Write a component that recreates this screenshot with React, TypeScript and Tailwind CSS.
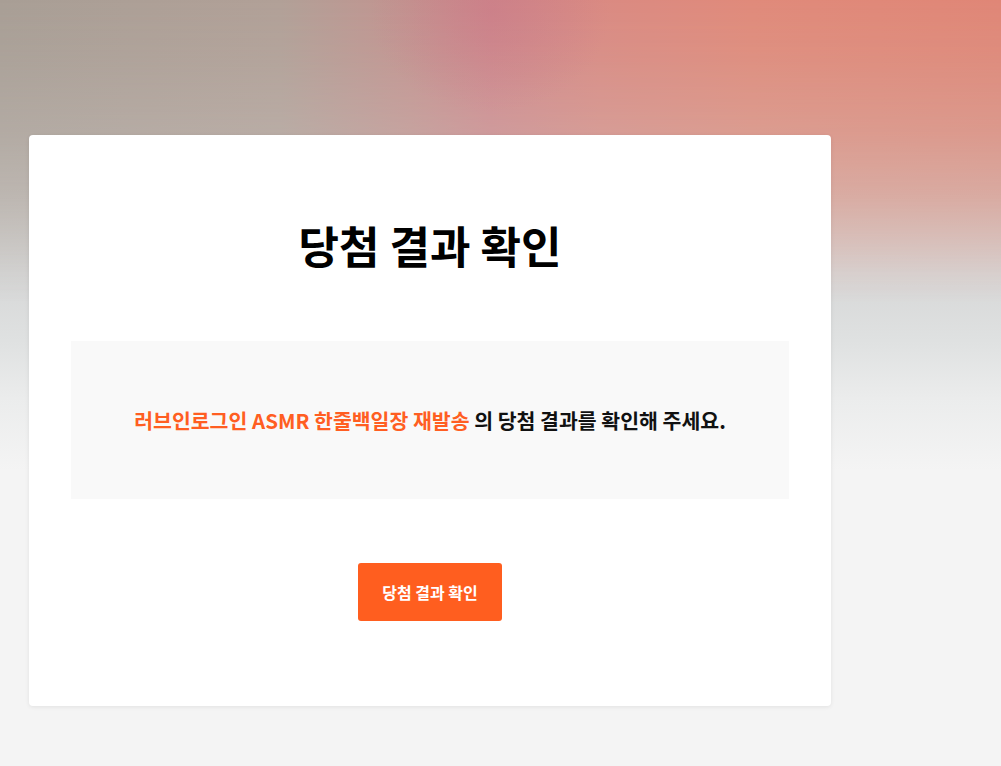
import React from "react";

export default function App() {
  return (
    <div
      className="relative min-h-screen w-full overflow-hidden bg-[#f4f4f4]"
      style={{ fontFamily: '"Noto Sans CJK KR", "Noto Sans", sans-serif' }}
    >
      <div className="pointer-events-none absolute inset-x-0 top-0 h-[480px] bg-[linear-gradient(180deg,#c8c4c0_0%,#d2d0ce_42%,#d8d9d9_60%,#dfe1e1_71%,#ebecec_83%,#f4f4f4_98%)]" />
      <div className="pointer-events-none absolute inset-x-0 top-0 h-[480px] [mask-image:linear-gradient(180deg,#000_0%,rgba(0,0,0,0.9)_12%,rgba(0,0,0,0.72)_28%,rgba(0,0,0,0.52)_40%,rgba(0,0,0,0.28)_50%,rgba(0,0,0,0.1)_57%,transparent_63%)] bg-[linear-gradient(90deg,#a89e95_0%,#b1a097_28%,#c3938f_41%,#cf878a_49%,#da8a82_60%,#e08a7a_75%,#e08676_100%)]" />
      <div className="pointer-events-none absolute inset-x-0 top-0 h-[480px] bg-[radial-gradient(ellipse_120px_100px_at_490px_12px,rgba(200,118,135,0.4),rgba(200,118,135,0)_100%)]" />

      <div className="relative pl-[29px] pt-[135px]">
        <div className="flex w-[802px] flex-col items-center rounded-[4px] bg-white px-[42px] pb-[85px] pt-[80px] shadow-[0_1px_4px_rgba(0,0,0,0.08)]">
          <h1 className="h-[60px] text-[44px] font-bold leading-[60px] text-black">
            당첨 결과 확인
          </h1>
          <div className="mt-[66px] flex h-[158px] w-full items-center justify-center bg-[#f9f9f9]">
            <p className="text-[20.5px] font-bold leading-[30px] text-[#111]">
              <span className="text-[#ff5e22]">러브인로그인 ASMR 한줄백일장 재발송</span> 의 당첨
              결과를 확인해 주세요.
            </p>
          </div>
          <button className="mt-[64px] h-[58px] w-[144px] rounded-[3px] bg-[#ff5e1f] text-[16px] font-bold text-white">
            당첨 결과 확인
          </button>
        </div>
      </div>
    </div>
  );
}
